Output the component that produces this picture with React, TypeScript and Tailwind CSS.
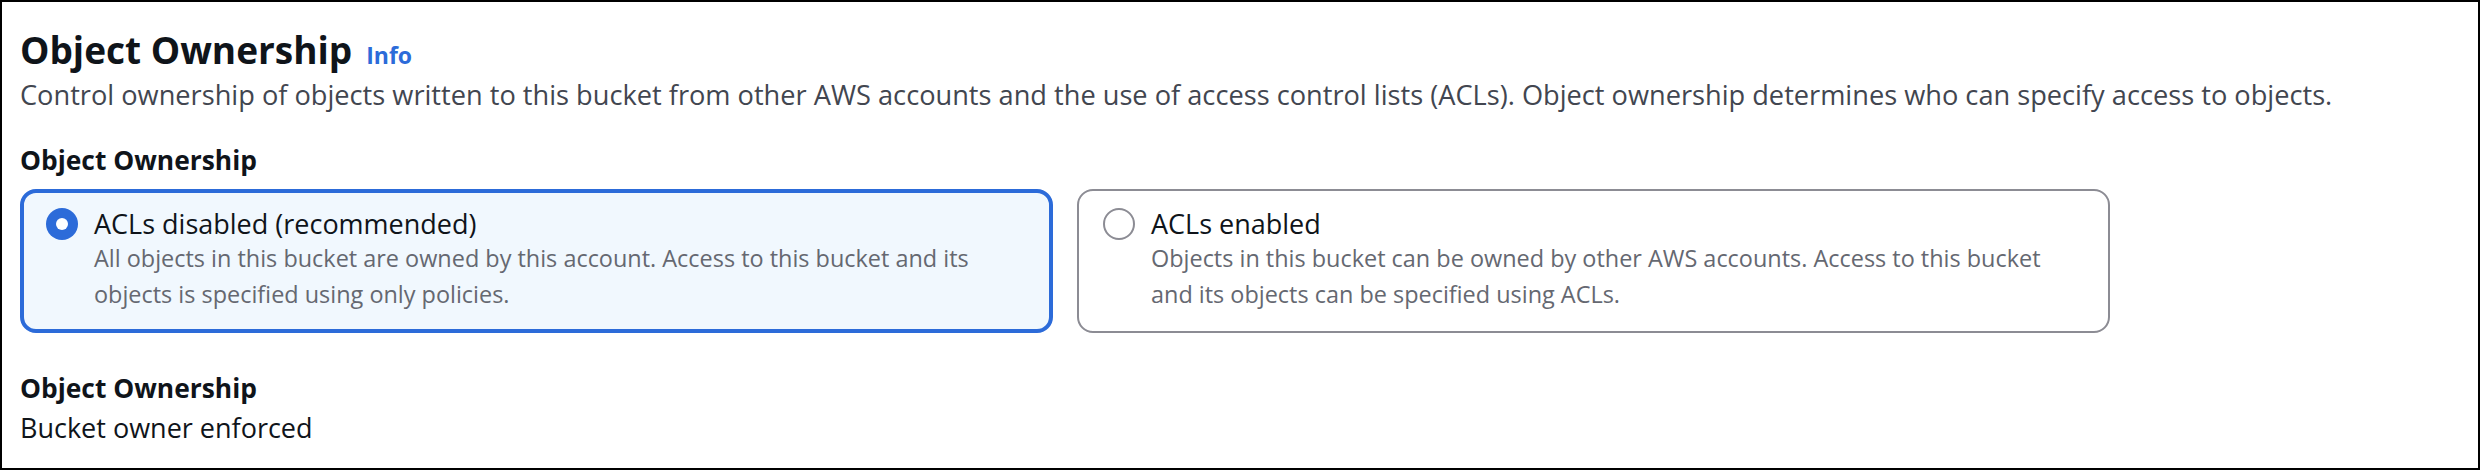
import React from "react";

const font = { fontFamily: '"Open Sans", "Noto Sans", sans-serif' };

function Radio({ checked }: { checked: boolean }) {
  if (checked) {
    return (
      <span className="flex h-[32px] w-[32px] shrink-0 items-center justify-center rounded-full bg-[#2c6bd9]">
        <span className="h-[12px] w-[12px] rounded-full bg-white" />
      </span>
    );
  }
  return <span className="h-[32px] w-[32px] shrink-0 rounded-full border-2 border-[#8c8c94] bg-white" />;
}

function Tile({
  checked,
  label,
  lines,
}: {
  checked: boolean;
  label: string;
  lines: string[];
}) {
  return (
    <div
      className={
        checked
          ? "box-border h-[144px] rounded-[16px] border-4 border-[#2c6bd9] bg-[#f1f8fe] pl-[22px] pt-[15px]"
          : "box-border h-[144px] rounded-[16px] border-2 border-[#8c8c94] bg-white pl-[24px] pt-[17px]"
      }
    >
      <div className="flex items-start gap-[16px]">
        <Radio checked={checked} />
        <div>
          <div className="text-[27px] leading-[32px] text-[#0f141a]">{label}</div>
          <div className="text-[23.45px] leading-[36px] text-[#656871]">
            {lines.map((l, i) => (
              <div key={i}>{l}</div>
            ))}
          </div>
        </div>
      </div>
    </div>
  );
}

export default function App() {
  return (
    <div
      style={font}
      className="box-border h-[470px] w-[2480px] border-2 border-black bg-white pl-[18px] pt-[26px]"
    >
      <div className="flex items-baseline">
        <h2 className="text-[37px] font-bold leading-[44px] text-[#0f141a]">Object Ownership</h2>
        <span className="ml-[14px] text-[23px] font-bold text-[#2c6bd9]">Info</span>
      </div>
      <p className="mt-[2px] text-[27.2px] leading-[40px] text-[#424650]">
        Control ownership of objects written to this bucket from other AWS accounts and the use of access control
        lists (ACLs). Object ownership determines who can specify access to objects.
      </p>
      <div className="mt-[25px] text-[26.4px] font-bold leading-[40px] text-[#0f141a]">Object Ownership</div>
      <div className="mt-[9px] grid w-[2090px] grid-cols-2 gap-[24px]">
        <Tile
          checked
          label="ACLs disabled (recommended)"
          lines={[
            "All objects in this bucket are owned by this account. Access to this bucket and its",
            "objects is specified using only policies.",
          ]}
        />
        <Tile
          checked={false}
          label="ACLs enabled"
          lines={[
            "Objects in this bucket can be owned by other AWS accounts. Access to this bucket",
            "and its objects can be specified using ACLs.",
          ]}
        />
      </div>
      <div className="mt-[35px] text-[26.4px] font-bold leading-[40px] text-[#0f141a]">Object Ownership</div>
      <div className="text-[27px] leading-[40px] text-[#0f141a]">Bucket owner enforced</div>
    </div>
  );
}
